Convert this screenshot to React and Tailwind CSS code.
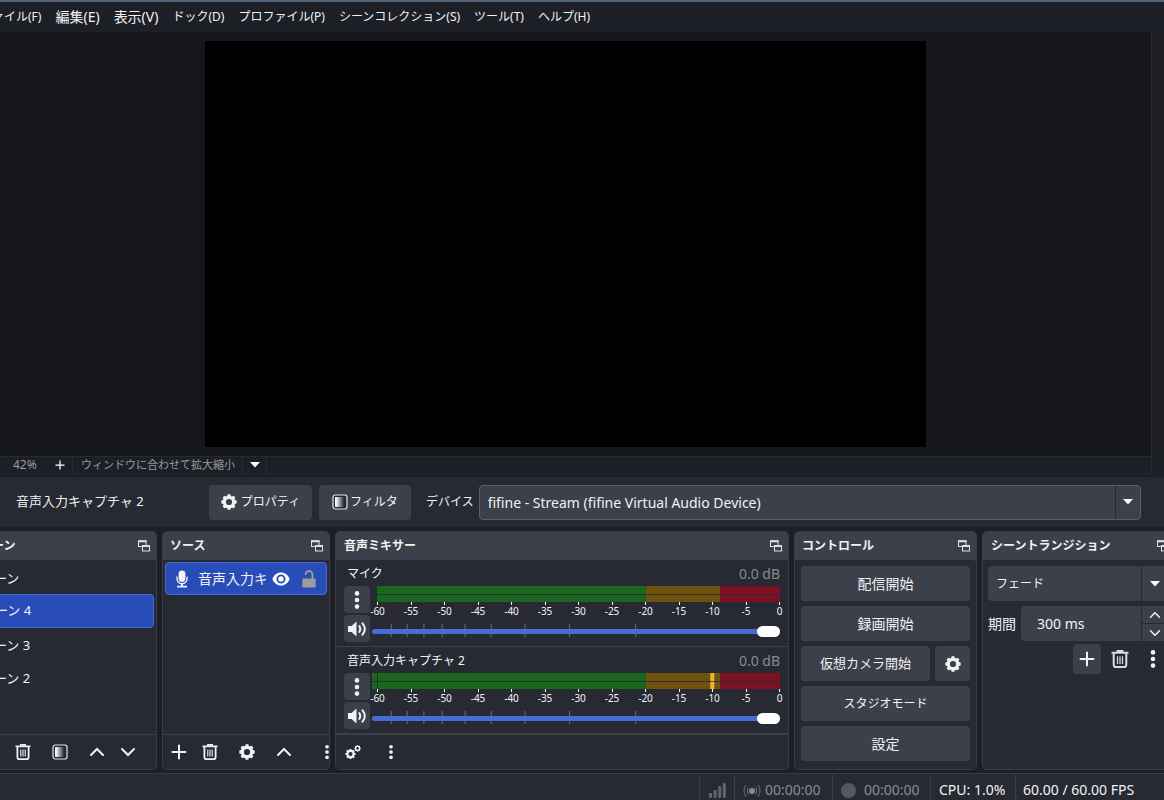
import React from "react";

const TEETH = [0, 45, 90, 135, 180, 225, 270, 315];
const MENU = [
  { label: "ファイル(F)" },
  { label: "編集(E)", kanji: true },
  { label: "表示(V)", kanji: true },
  { label: "ドック(D)" },
  { label: "プロファイル(P)" },
  { label: "シーンコレクション(S)" },
  { label: "ツール(T)" },
  { label: "ヘルプ(H)" },
];
const SCALE = [-60, -55, -50, -45, -40, -35, -30, -25, -20, -15, -10, -5, 0];
const FADER_MARKS = ["4.6%", "8.5%", "12.6%", "17.1%", "22.7%", "29.1%", "37.4%", "48.3%", "64.5%"];

function GearShape({ cx, cy, s }) {
  return (
    <g transform={`translate(${cx} ${cy}) scale(${s})`}>
      <circle r="4.7" fill="none" stroke="currentColor" strokeWidth="3.2" />
      {TEETH.map((a) => (
        <rect key={a} x="-1.7" y="-7.7" width="3.4" height="3.4" rx="0.8" fill="currentColor" transform={`rotate(${a})`} />
      ))}
    </g>
  );
}

function Gear({ className = "size-4" }) {
  return (
    <svg viewBox="0 0 16 16" className={className} aria-hidden="true">
      <GearShape cx={8} cy={8} s={1} />
    </svg>
  );
}

function Gears() {
  return (
    <svg viewBox="0 0 16 16" className="size-4" aria-hidden="true">
      <GearShape cx={5.5} cy={10} s={0.66} />
      <GearShape cx={12.6} cy={4.4} s={0.42} />
    </svg>
  );
}

function Trash({ className = "size-4" }) {
  return (
    <svg viewBox="0 0 16 16" className={className} fill="none" stroke="currentColor" aria-hidden="true">
      <path d="M0.5 2.4h15" strokeWidth="1.8" />
      <path d="M5 0.9h6" strokeWidth="1.6" />
      <path d="M2.4 3v10.2q0 2 2 2h7.2q2 0 2-2V3" strokeWidth="1.8" />
      <path d="M5.8 5.5v7M8 5.5v7M10.2 5.5v7" strokeWidth="1.1" />
    </svg>
  );
}

function Filter() {
  return (
    <svg viewBox="0 0 16 16" className="size-4" aria-hidden="true">
      <defs>
        <linearGradient id="fade">
          <stop offset="0.1" stopColor="#ffffff" />
          <stop offset="1" stopColor="#272a33" />
        </linearGradient>
      </defs>
      <rect x="1" y="1" width="14" height="14" rx="2.2" fill="#272a33" stroke="#e4e4e8" strokeWidth="1.2" />
      <rect x="3" y="3" width="9" height="10" fill="url(#fade)" />
    </svg>
  );
}

function Chevron({ down, className = "h-4 w-4" }) {
  return (
    <svg viewBox="0 0 16 16" className={className} fill="none" stroke="currentColor" strokeWidth="2" strokeLinecap="round" aria-hidden="true">
      <path d={down ? "M2 5l6 6 6-6" : "M2 11l6-6 6 6"} />
    </svg>
  );
}

function Plus({ className = "size-4" }) {
  return (
    <svg viewBox="0 0 16 16" className={className} fill="none" stroke="currentColor" strokeWidth="2" strokeLinecap="round" aria-hidden="true">
      <path d="M8 1.5v13M1.5 8h13" />
    </svg>
  );
}

function Dots({ className = "h-5 w-4" }) {
  return (
    <svg viewBox="0 0 16 20" className={className} fill="currentColor" aria-hidden="true">
      <circle cx="8" cy="3.4" r="2.3" />
      <circle cx="8" cy="10" r="2.3" />
      <circle cx="8" cy="16.6" r="2.3" />
    </svg>
  );
}

function Triangle() {
  return (
    <svg viewBox="0 0 10 6" className="h-1.5 w-2.5" fill="#ffffff" aria-hidden="true">
      <path d="M0 0h10L5 5.6z" />
    </svg>
  );
}

function PopOut() {
  return (
    <svg viewBox="0 0 12 12" className="size-3" fill="none" stroke="currentColor" aria-hidden="true">
      <rect x="0.5" y="1" width="7.5" height="5.5" />
      <path d="M0 1.2h8.500" strokeWidth="2" />
      <rect x="4.500" y="5.500" width="7" height="5.500" fill="#3c404b" />
      <path d="M4 5.900h8" strokeWidth="2" />
    </svg>
  );
}

function Mic() {
  return (
    <svg viewBox="0 0 12 18" className="h-[18px] w-3" fill="none" stroke="currentColor" aria-hidden="true">
      <rect x="2.600" y="0.5" width="6.800" height="11.500" rx="3.400" fill="currentColor" stroke="none" />
      <path d="M1 6.5v2.5a5 4.6 0 0 0 10 0V6.5" strokeWidth="1.3" />
      <path d="M6 13.5v3" strokeWidth="2" />
      <path d="M1 16.6h10" strokeWidth="1.9" />
    </svg>
  );
}

function Eye() {
  return (
    <svg viewBox="0 0 18 14" className="h-3.5 w-[18px] shrink-0" aria-hidden="true">
      <path d="M0.4 7C2 2.8 5.2 0.5 9 0.5S16 2.8 17.6 7C16 11.2 12.8 13.5 9 13.5S2 11.2 0.4 7z" fill="#ffffff" />
      <circle cx="9" cy="7" r="3.6" fill="none" stroke="#284cb8" strokeWidth="1.8" />
    </svg>
  );
}

function Unlock() {
  return (
    <svg viewBox="0 0 14 18" className="h-[18px] w-3.5 shrink-0" aria-hidden="true">
      <rect x="0.3" y="8.5" width="13.4" height="9" rx="1.3" fill="#9c9c9c" />
      <path d="M3.5 5V4.6a3.5 3.6 0 0 1 7 0V9" fill="none" stroke="#9c9c9c" strokeWidth="1.9" />
    </svg>
  );
}

function Speaker() {
  return (
    <svg viewBox="0 0 20 18" className="h-[18px] w-5" fill="none" stroke="currentColor" strokeWidth="2" strokeLinecap="round" aria-hidden="true">
      <path d="M1 6h3.600L9.500 1.500v15L4.600 12H1z" fill="currentColor" stroke="none" />
      <path d="M12.300 6q2 3 0 6" />
      <path d="M15.500 3.300q4.600 5.700 0 11.400" />
    </svg>
  );
}

function IconButton({ label, size = "h-7 w-[26px]", className = "", children }) {
  return (
    <button type="button" aria-label={label} className={`flex shrink-0 items-center justify-center rounded ${size} ${className}`}>
      {children}
    </button>
  );
}

function Dock({ title, className, inset = "pl-[7px]", children }) {
  return (
    <section className={`flex flex-col overflow-hidden rounded-[5px] border border-[#3a3d48] bg-[#272a33] ${className}`}>
      <header className={`flex h-7 shrink-0 items-center justify-between bg-[#3c404b] pr-1.5 ${inset}`}>
        <h2 className="text-xs font-bold whitespace-nowrap">{title}</h2>
        <button type="button" aria-label={`${title} を切り離す`} className="text-[#e0e0e4]">
          <PopOut />
        </button>
      </header>
      {children}
    </section>
  );
}

function Meter({ active }) {
  return (
    <svg className="block h-4 w-full overflow-visible" aria-hidden="true">
      <rect width="66.7%" height="16" fill="#1b671f" />
      <rect x="66.7%" width="18.5%" height="16" fill="#70520f" />
      <rect x="85.2%" width="14.8%" height="16" fill="#7b1224" />
      {active && (
        <>
          <rect x="-5" width="5" height="16" fill="#1b671f" />
          <rect width="1" height="16" fill="#17391f" />
          <rect x="82.7%" width="4" height="16" fill="#f0b429" />
        </>
      )}
      <rect x={active ? -5 : 0} y="8" width={active ? "101.2%" : "100%"} height="1" fill="#272a33" opacity="0.8" />
    </svg>
  );
}

function Channel({ name, active }) {
  return (
    <div className="border-b border-[#3c404b] pr-2 pb-1 pl-2">
      <div className="flex h-[26px] items-center justify-between pt-0.5 pl-[3px]">
        <span className="text-xs">{name}</span>
        <span className="text-sm text-[#8a8c92]">0.0 dB</span>
      </div>
      <div className="flex gap-0.5">
        <div className="flex flex-col gap-0.5">
          <IconButton label={`${name} のメニュー`} size="h-[27px] w-[26px]" className="bg-[#3c404b]">
            <Dots />
          </IconButton>
          <IconButton label={`${name} をミュート`} size="h-[27px] w-[26px]" className="bg-[#3c404b]">
            <Speaker />
          </IconButton>
        </div>
        <div className="min-w-0 flex-1">
          <div className="pl-[5px]">
            <Meter active={active} />
            <div className="flex justify-between">
              {SCALE.map((n) => (
                <div key={n} className="flex w-px flex-col items-center">
                  <span className="h-[3px] w-px bg-white" />
                  <span className="text-[10px] leading-3">{n}</span>
                </div>
              ))}
            </div>
          </div>
          <div className="relative mt-[7px] h-3.5">
            <svg className="absolute inset-0 h-full w-full" aria-hidden="true">
              {FADER_MARKS.map((x) => (
                <rect key={x} x={x} y="0" width="1" height="13" fill="#6a6d76" />
              ))}
            </svg>
            <input
              type="range"
              min="0"
              max="100"
              defaultValue="100"
              aria-label={`${name} の音量`}
              className="absolute inset-0 h-full w-full appearance-none bg-transparent [&::-webkit-slider-runnable-track]:h-[5px] [&::-webkit-slider-runnable-track]:rounded-full [&::-webkit-slider-runnable-track]:bg-[#476bd7] [&::-webkit-slider-thumb]:-mt-[3px] [&::-webkit-slider-thumb]:h-[11px] [&::-webkit-slider-thumb]:w-[23px] [&::-webkit-slider-thumb]:appearance-none [&::-webkit-slider-thumb]:rounded-full [&::-webkit-slider-thumb]:bg-white"
            />
          </div>
        </div>
      </div>
    </div>
  );
}

function PanelButton({ className = "text-sm", children, ...rest }) {
  return (
    <button type="button" className={`flex h-[35px] items-center justify-center rounded bg-[#3c404b] ${className}`} {...rest}>
      {children}
    </button>
  );
}

export default function App() {
  return (
    <div className="h-screen overflow-hidden bg-[#1d1f26] font-['Noto_Sans','Noto_Sans_CJK_JP',sans-serif] text-[#f2f2f4]">
      <div className="-mr-3 -ml-8 flex h-full flex-col">
        <nav className="flex h-8 shrink-0 items-center gap-3.5 border-t-2 border-[#50647a] pl-3">
          {MENU.map((m) => (
            <button type="button" key={m.label} className={`whitespace-nowrap ${m.kanji ? "text-sm" : "text-xs"}`}>
              {m.label}
            </button>
          ))}
        </nav>

        <main className="flex min-h-0 flex-1 flex-col pr-3">
          <div className="flex min-h-0 flex-1">
            <div className="flex min-w-0 flex-1 justify-center bg-[#15161b] py-[9px] pl-3">
              <div className="aspect-video h-full bg-black" />
            </div>
            <div className="w-[13px] border-l border-[#272a31] bg-[#1c1e24]" />
          </div>
          <div className="mr-3 flex h-[18px] shrink-0 items-center border border-[#272a31] text-[#999a9e]">
            <span className="w-[78px] pl-11 text-xs">42%</span>
            <button type="button" aria-label="拡大" className="flex w-[25px] justify-center text-white">
              <Plus className="size-2.5" />
            </button>
            <div className="relative flex h-full w-[195px] items-center border-x border-[#272a31]">
              <select aria-label="プレビューの拡大縮小" className="h-full w-full appearance-none bg-transparent pl-2 text-[11px]">
                <option>ウィンドウに合わせて拡大縮小</option>
              </select>
              <span className="pointer-events-none absolute right-0 flex h-full w-6 items-center justify-center border-l border-[#272a31]">
                <Triangle />
              </span>
            </div>
          </div>
        </main>

        <div className="mt-[3px] flex h-[50px] shrink-0 items-center bg-[#272a33] pr-[35px] pl-12">
          <span className="w-[193px] text-[13px]">音声入力キャプチャ 2</span>
          <PanelButton className="mr-[7px] w-[103px] gap-1 text-xs">
            <Gear />
            プロパティ
          </PanelButton>
          <PanelButton className="mr-[15px] w-[92px] gap-0.5 text-xs">
            <Filter />
            フィルタ
          </PanelButton>
          <label htmlFor="device" className="mr-[5px] text-xs whitespace-nowrap">
            デバイス
          </label>
          <div className="relative flex h-[35px] min-w-0 flex-1">
            <select id="device" className="w-full appearance-none rounded border border-[#5b5f6b] bg-[#3c404b] pt-px pl-2 text-sm">
              <option>fifine - Stream (fifine Virtual Audio Device)</option>
            </select>
            <span className="pointer-events-none absolute inset-y-px right-px flex w-[25px] items-center justify-center border-l border-[#272a33]">
              <Triangle />
            </span>
          </div>
        </div>

        <div className="flex shrink-0 gap-[5px] pt-1 pb-[3px]">
          <Dock title="シーン" inset="pl-[11px]" className="w-[189px]">
            <ul className="flex-1 pt-px pr-0.5 text-[13px]">
              {["シーン", "シーン 4", "シーン 3", "シーン 2"].map((s, i) => (
                <li key={s}>
                  <button
                    type="button"
                    className={`flex w-full items-center pl-3 ${i === 1 ? "h-[34px] rounded border border-[#476bd7] bg-[#284cb8]" : "mt-0.5 h-[31px]"}`}
                  >
                    {s}
                  </button>
                </li>
              ))}
            </ul>
            <div className="flex h-[35px] items-center gap-[5px] border-t border-[#3c404b] pl-2.5">
              <IconButton label="シーンを追加"><Plus /></IconButton>
              <IconButton label="シーンを削除"><Trash /></IconButton>
              <IconButton label="シーンフィルタ" className="ml-1.5"><Filter /></IconButton>
              <IconButton label="上へ" className="ml-1.5"><Chevron /></IconButton>
              <IconButton label="下へ"><Chevron down /></IconButton>
            </div>
          </Dock>

          <Dock title="ソース" className="w-[168px]">
            <div className="flex-1 px-0.5 pt-0.5">
              <div className="flex h-[33px] items-center rounded border border-[#476bd7] bg-[#284cb8] pr-2.5 pl-2.5">
                <Mic />
                <span className="ml-2.5 min-w-0 flex-1 overflow-hidden text-sm whitespace-nowrap">音声入力キャプチャ 2</span>
                <button type="button" aria-label="表示" className="mr-3 ml-1.5"><Eye /></button>
                <button type="button" aria-label="ロック"><Unlock /></button>
              </div>
            </div>
            <div className="flex h-[35px] items-center gap-[5px] border-t border-[#3c404b] pl-[3px]">
              <IconButton label="ソースを追加"><Plus /></IconButton>
              <IconButton label="ソースを削除"><Trash /></IconButton>
              <IconButton label="ソースのプロパティ" className="ml-1.5"><Gear /></IconButton>
              <IconButton label="上へ" className="ml-1.5"><Chevron /></IconButton>
              <IconButton label="その他" className="ml-3"><Dots className="h-4 w-4" /></IconButton>
            </div>
          </Dock>

          <Dock title="音声ミキサー" inset="pl-2" className="min-w-0 flex-1">
            <div className="flex-1">
              <Channel name="マイク" />
              <Channel name="音声入力キャプチャ 2" active />
            </div>
            <div className="flex h-[35px] items-center gap-3 border-t border-[#3c404b] pl-1">
              <IconButton label="オーディオの詳細プロパティ"><Gears /></IconButton>
              <IconButton label="ミキサーメニュー"><Dots className="h-4 w-4" /></IconButton>
            </div>
          </Dock>

          <Dock title="コントロール" className="w-[183px]">
            <div className="flex flex-col gap-[5px] px-1.5 pt-1.5 pb-[7px]">
              <PanelButton>配信開始</PanelButton>
              <PanelButton>録画開始</PanelButton>
              <div className="flex gap-[5px]">
                <PanelButton className="flex-1 text-[13px]">仮想カメラ開始</PanelButton>
                <PanelButton className="w-[35px]" aria-label="仮想カメラの設定"><Gear /></PanelButton>
              </div>
              <PanelButton className="text-xs">スタジオモード</PanelButton>
              <PanelButton>設定</PanelButton>
            </div>
          </Dock>

          <Dock title="シーントランジション" inset="pl-2" className="w-[194px]">
            <div className="flex flex-col gap-[5px] pt-1.5 pr-2 pl-[5px]">
              <div className="relative flex h-[35px]">
                <select aria-label="トランジション" className="w-full appearance-none rounded bg-[#3c404b] pl-2 text-xs">
                  <option>フェード</option>
                </select>
                <span className="pointer-events-none absolute inset-y-0 right-0 flex w-[26px] items-center justify-center border-l border-[#272a33]">
                  <Triangle />
                </span>
              </div>
              <div className="flex h-[35px] items-center gap-[5px]">
                <label htmlFor="duration" className="shrink-0 text-sm">期間</label>
                <div className="flex h-full min-w-0 flex-1 overflow-hidden rounded bg-[#3c404b]">
                  <input id="duration" defaultValue="300 ms" className="min-w-0 flex-1 bg-transparent pl-4 text-sm" />
                  <div className="flex w-[26px] flex-col border-l border-[#272a33]">
                    <button type="button" aria-label="増やす" className="flex flex-1 items-center justify-center border-b border-[#272a33]">
                      <Chevron className="size-3" />
                    </button>
                    <button type="button" aria-label="減らす" className="flex flex-1 items-center justify-center">
                      <Chevron down className="size-3" />
                    </button>
                  </div>
                </div>
              </div>
              <div className="-mt-0.5 flex justify-end gap-[5px]">
                <IconButton label="トランジションを追加" size="h-[30px] w-7" className="bg-[#3c404b]"><Plus /></IconButton>
                <IconButton label="トランジションを削除" size="h-[30px] w-7" className="text-[#dcdce0]"><Trash className="size-[18px]" /></IconButton>
                <IconButton label="トランジションメニュー" size="h-[30px] w-7"><Dots /></IconButton>
              </div>
            </div>
          </Dock>
        </div>

        <footer className="flex h-[27px] shrink-0 justify-end border-t border-[#3a3d48] bg-[#272a33] pr-3 text-sm leading-8 whitespace-nowrap text-[#8a8c92]">
          <div className="flex w-[35px] justify-center border-l border-[#3a3d48] pt-2">
            <svg viewBox="0 0 17 16" className="h-4 w-[17px]" fill="#62656e" aria-hidden="true">
              <rect y="11" width="3" height="5" rx="1" />
              <rect x="4.600" y="8" width="3" height="8" rx="1" />
              <rect x="9.200" y="4" width="3" height="12" rx="1" />
              <rect x="13.800" y="1" width="3" height="15" rx="1" />
            </svg>
          </div>
          <div className="flex w-[98px] items-start gap-1 border-l border-[#3a3d48] pl-2">
            <svg viewBox="0 0 18 14" className="mt-2.5 h-3.5 w-[18px]" fill="none" stroke="#62656e" strokeWidth="1.2" aria-hidden="true">
              <circle cx="9" cy="7" r="3" fill="#8a8c92" stroke="none" />
              <path d="M5.500 3.200q-2.400 3.800 0 7.600M12.500 3.200q2.400 3.800 0 7.600M3 1.200q-4 5.800 0 11.600M15 1.200q4 5.800 0 11.600" />
            </svg>
            <span>00:00:00</span>
          </div>
          <div className="flex w-[98px] items-start gap-2 border-l border-[#3a3d48] pl-2">
            <span className="mt-[9px] size-[15px] shrink-0 rounded-full bg-[#55585f]" />
            <span>00:00:00</span>
          </div>
          <div className="w-[85px] border-l border-[#3a3d48] pl-2 text-[#f2f2f4]">CPU: 1.0%</div>
          <div className="w-[149px] border-l border-[#3a3d48] pl-[7px] text-[#f2f2f4]">60.00 / 60.00 FPS</div>
        </footer>
      </div>
    </div>
  );
}
